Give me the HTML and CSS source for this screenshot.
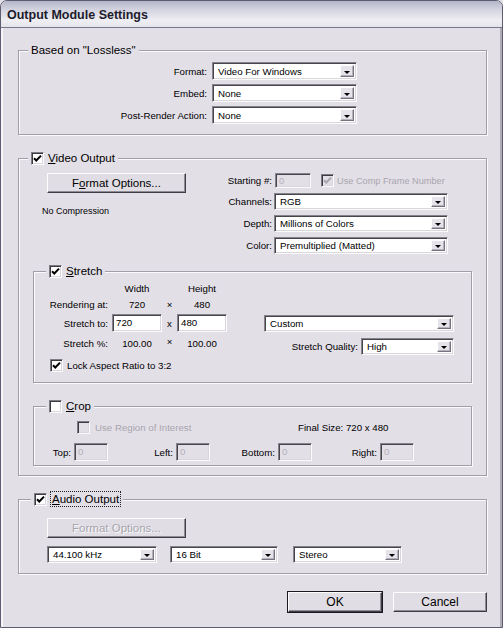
FILE: index.html
```html
<!DOCTYPE html>
<html lang="en">
<head>
    <meta charset="UTF-8">
    <meta name="viewport" content="width=device-width, initial-scale=1.0">
    <title>Output Module Settings</title>
    <link rel="stylesheet" href="styles.css">
</head>
<body>
<div class="window">
    <div class="titlebar">Output Module Settings</div>
    <div class="client">

        <fieldset class="group">
            <legend>Based on "Lossless"</legend>
            <div class="based-rows">
                <span class="lbl">Format:</span>
                <div class="dd"><span class="dd-text">Video For Windows</span><span class="dd-btn"></span></div>
                <span class="lbl">Embed:</span>
                <div class="dd"><span class="dd-text">None</span><span class="dd-btn"></span></div>
                <span class="lbl">Post-Render Action:</span>
                <div class="dd"><span class="dd-text">None</span><span class="dd-btn"></span></div>
            </div>
        </fieldset>

        <fieldset class="group video">
            <legend>
                <span class="legend-in">
                    <span class="cb"><svg viewBox="0 0 11 11" width="11" height="11"><path d="M2 5.2 L4.3 7.5 L9 2.6" /></svg></span>
                    <span><u>V</u>ideo Output</span>
                </span>
            </legend>
            <div class="vo-top">
                <div class="vo-left">
                    <button class="btn opts">F<u>o</u>rmat Options...</button>
                    <div class="codec">No Compression</div>
                </div>
                <div class="vo-fields">
                    <span class="lbl">Starting #:</span>
                    <div class="start-row">
                        <div class="tf off start">0</div>
                        <span class="cb off"><svg viewBox="0 0 11 11" width="11" height="11"><path d="M2 5.2 L4.3 7.5 L9 2.6" /></svg></span>
                        <span class="muted">Use Comp Frame Number</span>
                    </div>
                    <span class="lbl">Channels:</span>
                    <div class="dd"><span class="dd-text">RGB</span><span class="dd-btn"></span></div>
                    <span class="lbl">Depth:</span>
                    <div class="dd"><span class="dd-text">Millions of Colors</span><span class="dd-btn"></span></div>
                    <span class="lbl">Color:</span>
                    <div class="dd"><span class="dd-text">Premultiplied (Matted)</span><span class="dd-btn"></span></div>
                </div>
            </div>

            <fieldset class="group sub stretch">
                <legend>
                    <span class="legend-in">
                        <span class="cb"><svg viewBox="0 0 11 11" width="11" height="11"><path d="M2 5.2 L4.3 7.5 L9 2.6" /></svg></span>
                        <span><u>S</u>tretch</span>
                    </span>
                </legend>
                <div class="stretch-body">
                    <div class="dims">
                        <span></span><span>Width</span><span></span><span>Height</span>
                        <span class="lbl">Rendering at:</span><span>720</span><span>&times;</span><span>480</span>
                        <span class="lbl">Stretch to:</span><div class="tf">720</div><span>x</span><div class="tf">480</div>
                        <span class="lbl">Stretch %:</span><span>100.00</span><span class="times-up">&times;</span><span>100.00</span>
                    </div>
                    <div class="stretch-right">
                        <div class="dd custom"><span class="dd-text">Custom</span><span class="dd-btn"></span></div>
                        <div class="quality">
                            <span>Stretch Quality:</span>
                            <div class="dd"><span class="dd-text">High</span><span class="dd-btn"></span></div>
                        </div>
                    </div>
                </div>
                <div class="check-row lock">
                    <span class="cb"><svg viewBox="0 0 11 11" width="11" height="11"><path d="M2 5.2 L4.3 7.5 L9 2.6" /></svg></span>
                    <span>Lock Aspect Ratio to 3:2</span>
                </div>
            </fieldset>

            <fieldset class="group sub crop">
                <legend>
                    <span class="legend-in">
                        <span class="cb"></span>
                        <span><u>C</u>rop</span>
                    </span>
                </legend>
                <div class="crop-top">
                    <div class="check-row region">
                        <span class="cb off"></span>
                        <span class="muted">Use Region of Interest</span>
                    </div>
                    <span>Final Size: 720 x 480</span>
                </div>
                <div class="crop-fields">
                    <div class="crop-cell"><span>Top:</span><div class="tf off">0</div></div>
                    <div class="crop-cell"><span>Left:</span><div class="tf off">0</div></div>
                    <div class="crop-cell"><span>Bottom:</span><div class="tf off">0</div></div>
                    <div class="crop-cell"><span>Right:</span><div class="tf off">0</div></div>
                </div>
            </fieldset>
        </fieldset>

        <fieldset class="group audio">
            <legend>
                <span class="legend-in">
                    <span class="cb"><svg viewBox="0 0 11 11" width="11" height="11"><path d="M2 5.2 L4.3 7.5 L9 2.6" /></svg></span>
                    <span class="focus"><u>A</u>udio Output</span>
                </span>
            </legend>
            <div class="audio-body">
                <button class="btn opts" disabled>Format Options...</button>
                <div class="audio-dds">
                    <div class="dd rate"><span class="dd-text">44.100 kHz</span><span class="dd-btn"></span></div>
                    <div class="dd bits"><span class="dd-text">16 Bit</span><span class="dd-btn"></span></div>
                    <div class="dd chans"><span class="dd-text">Stereo</span><span class="dd-btn"></span></div>
                </div>
            </div>
        </fieldset>

        <div class="actions">
            <button class="btn wide default">OK</button>
            <button class="btn wide">Cancel</button>
        </div>
    </div>
</div>
</body>
</html>
```

FILE: styles.css
```css
* {
    box-sizing: border-box;
}
body {
    margin: 0;
    background: #e3dfe7;
    font-family: "Liberation Sans", Arial, sans-serif;
    font-size: 9.7px;
    color: #000;
}

/* window frame */
.window {
    width: 503px;
    height: 628px;
    display: flex;
    flex-direction: column;
    background: #e3dfe7;
    border: 1px solid #5d5c70;
    border-radius: 7px 7px 0 0;
    overflow: hidden;
}
.titlebar {
    flex: none;
    height: 27px;
    padding: 4px 0 0 6px;
    font-size: 12.5px;
    font-weight: bold;
    line-height: 20px;
    color: #1c1c2c;
    background: linear-gradient(#b3b4c8, #d5d5e1 35%, #eeeef3 75%, #e4e4ec);
    border-bottom: 1px solid #77768a;
}
.client {
    flex: 1;
    padding: 15px 15px 0 17px;
    box-shadow: inset 2px 0 #f6f4f8, inset -2px 0 #aeabb6;
}

/* group boxes */
.group {
    margin: 0;
    padding: 0;
    min-width: 0;
    border: 1px solid #a19ea8;
    box-shadow: inset 1px 1px #fbfafc, 1px 1px #fbfafc;
}
legend {
    margin-left: 9px;
    padding: 0 3px;
    font-size: 11.5px;
    line-height: 14px;
    background: #e3dfe7;
}
.legend-in {
    display: flex;
    align-items: center;
    gap: 4px;
}
.sub legend,
.audio legend {
    margin-left: 12px;
}
.focus {
    outline: 1px dotted #222;
    outline-offset: 0;
    padding: 0 1px;
}
.lbl {
    text-align: right;
    white-space: nowrap;
}
.muted {
    color: #a8a5ae;
    white-space: nowrap;
}

/* drop-down lists */
.dd {
    display: flex;
    align-items: center;
    height: 18px;
    padding: 2px;
    background: #fff;
    border: 1px solid;
    border-color: #86838d #fbfbfc #fbfbfc #86838d;
    box-shadow: inset 1px 1px #47454c, inset -1px -1px #d9d6dd;
}
.dd-text {
    flex: 1;
    padding-left: 3px;
    white-space: nowrap;
    overflow: hidden;
}
.dd-btn {
    width: 14px;
    height: 100%;
    display: flex;
    align-items: center;
    justify-content: center;
    background: #e6e3ea;
    border: 1px solid;
    border-color: #fdfdfe #77747f #77747f #fdfdfe;
    box-shadow: inset -1px -1px #b5b2bc;
}
.dd-btn::after {
    content: "";
    margin-top: 2px;
    border-left: 3px solid transparent;
    border-right: 3px solid transparent;
    border-top: 3px solid #000;
}

/* text fields */
.tf {
    height: 18px;
    padding: 1px 0 0 3px;
    line-height: 14px;
    background: #fff;
    border: 1px solid;
    border-color: #86838d #fbfbfc #fbfbfc #86838d;
    box-shadow: inset 1px 1px #47454c, inset -1px -1px #d9d6dd;
    text-align: left;
}
.tf.off {
    width: 34px;
    background: #e3dfe7;
    color: #b3b0b8;
}

/* check boxes */
.cb {
    flex: none;
    width: 13px;
    height: 13px;
    display: flex;
    align-items: center;
    justify-content: center;
    background: #fff;
    border: 1px solid;
    border-color: #7e7b85 #fbfbfc #fbfbfc #7e7b85;
    box-shadow: inset 1px 1px #3d3b42, inset -1px -1px #d9d6dd;
}
.cb svg {
    display: block;
}
.cb path {
    fill: none;
    stroke: #000;
    stroke-width: 2;
}
.cb.off {
    background: #e3dfe7;
}
.cb.off path {
    stroke: #a8a5ae;
}
.check-row {
    display: flex;
    align-items: center;
    height: 14px;
}

/* push buttons */
.btn {
    height: 20px;
    padding: 0;
    font-family: inherit;
    font-size: 11.5px;
    color: #000;
    background: #e0dde4;
    border: 1px solid;
    border-color: #fdfdfe #3e3c44 #3e3c44 #fdfdfe;
    box-shadow: inset -1px -1px #8f8c96;
}
.btn:disabled {
    color: #a8a5ae;
    text-shadow: 1px 1px #fbfbfc;
}
.btn.opts {
    width: 139px;
}
.btn.wide {
    width: 94px;
    font-size: 12px;
}
.btn.default {
    outline: 1px solid #1a1a1e;
}

/* Based on section */
.based-rows {
    display: grid;
    grid-template-columns: 188px 145px;
    grid-auto-rows: 18px;
    column-gap: 5px;
    row-gap: 4px;
    align-items: center;
    padding: 5px 0 10px;
}

/* Video output */
.video {
    margin-top: 16px;
    padding-bottom: 9px;
}
.vo-top {
    display: flex;
    padding: 8px 0 0 23px;
}
.vo-left {
    width: 172px;
}
.vo-left .btn {
    margin-left: 5px;
}
.codec {
    margin-top: 11px;
    line-height: 14px;
    font-size: 9px;
}
.vo-fields {
    display: grid;
    grid-template-columns: 58px 174px;
    grid-template-rows: 15px 17px 17px 17px;
    column-gap: 2px;
    row-gap: 5px;
    align-items: center;
}
.vo-fields .dd {
    height: 17px;
}
.start-row {
    display: flex;
    align-items: center;
    height: 15px;
    font-size: 9.2px;
}
.tf.start {
    width: 36px;
    height: 15px;
    line-height: 12px;
    margin-left: 1px;
}
.start-row .cb {
    margin-left: 10px;
    margin-right: 3px;
}

/* Stretch */
.sub {
    margin: 10px 14px 0;
}
.stretch-body {
    display: flex;
    height: 74px;
    padding: 2px 17px 0 15px;
}
.dims {
    display: grid;
    grid-template-columns: 63px 50px 15px 50px;
    grid-template-rows: 16px 16px 22px 18px;
    align-items: center;
    text-align: center;
}
.dims .lbl {
    padding-right: 4px;
}
.times-up {
    margin-top: -4px;
}
.stretch-right {
    margin-left: auto;
    margin-top: 35px;
    display: flex;
    flex-direction: column;
    align-items: flex-end;
    gap: 6px;
}
.stretch-right .dd {
    height: 17px;
}
.custom {
    width: 190px;
}
.quality {
    display: flex;
    align-items: center;
    gap: 3px;
}
.quality .dd {
    width: 93px;
}
.lock {
    gap: 4px;
    margin: 6px 0 10px 16px;
}

/* Crop */
.crop {
    margin-top: 16px;
}
.crop-top {
    display: grid;
    grid-template-columns: 249px auto;
    align-items: center;
    height: 14px;
    margin: 7px 0 0 15px;
}
.region {
    gap: 5px;
    padding-left: 28px;
}
.crop-fields {
    display: grid;
    grid-template-columns: 59px 102px 102px 102px;
    margin: 9px 0 4px 15px;
}
.crop-cell {
    display: flex;
    justify-content: flex-end;
    align-items: center;
    gap: 3px;
}

/* Audio output */
.audio {
    margin-top: 16px;
}
.audio-body {
    padding: 12px 0 10px 28px;
}
.audio-dds {
    display: flex;
    margin-top: 8px;
}
.audio-dds .dd {
    height: 17px;
}
.rate {
    width: 110px;
}
.bits {
    width: 108px;
    margin-left: 13px;
}
.chans {
    width: 109px;
    margin-left: 15px;
}

.actions {
    display: flex;
    justify-content: flex-end;
    gap: 11px;
    margin-top: 18px;
}
```
